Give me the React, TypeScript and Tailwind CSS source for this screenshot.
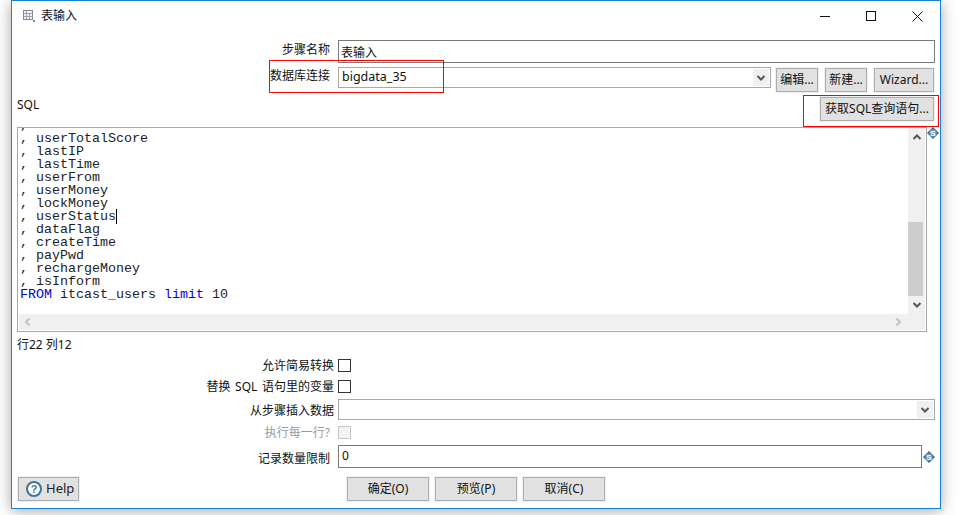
import type { ReactNode } from "react";

const sqlLines = [
  "userTotalScore",
  "lastIP",
  "lastTime",
  "userFrom",
  "userMoney",
  "lockMoney",
  "userStatus",
  "dataFlag",
  "createTime",
  "payPwd",
  "rechargeMoney",
  "isInform",
];

function Chevron({ dir, color = "#555555" }: { dir: "up" | "down" | "left" | "right"; color?: string }) {
  const paths = {
    up: "M1.5 6 5 2.5 8.5 6",
    down: "M1.5 3 5 6.5 8.5 3",
    left: "M6.5 1.5 3 5 6.5 8.5",
    right: "M3.5 1.5 7 5 3.5 8.5",
  };
  return (
    <svg width="10" height="10" viewBox="0 0 10 10" fill="none">
      <path d={paths[dir]} stroke={color} strokeWidth="2" />
    </svg>
  );
}

function VariableIcon() {
  return (
    <svg width="12" height="12" viewBox="0 0 12 12">
      <polygon points="6,0 12,6 6,12 0,6" fill="#3a6a8e" />
      <circle cx="6" cy="6" r="3.8" fill="#6f97b3" />
      <text x="6" y="8.8" textAnchor="middle" fontSize="8" fontWeight="700" fill="#ffffff" fontFamily="Liberation Sans, sans-serif">
        S
      </text>
    </svg>
  );
}

function Button({ className, children }: { className: string; children: ReactNode }) {
  return (
    <div className={`flex items-center justify-center border border-[#f0f0f0] ${className}`}>
      <div className="flex h-full w-full items-center justify-center border border-[#adadad] bg-[#e1e1e1] text-[12px] text-[#111]">
        {children}
      </div>
    </div>
  );
}

function Row({ label, pad, className, muted, children }: { label: string; pad: string; className: string; muted?: boolean; children: ReactNode }) {
  return (
    <div className={`flex items-center ${className}`}>
      <div className={`w-[321px] shrink-0 text-right text-[12px] ${pad} ${muted ? "text-[#9a9a9a]" : "text-[#111]"}`}>{label}</div>
      {children}
    </div>
  );
}

function Combo({ className, children }: { className: string; children?: ReactNode }) {
  return (
    <div className={`flex h-[21px] items-center justify-between border border-[#a9a9a9] bg-white pl-[3px] pr-px ${className}`}>
      <span className="text-[12.5px] text-[#111]">{children}</span>
      <span className="flex h-[17px] w-[16px] items-center justify-center bg-[#f0f0f0]">
        <Chevron dir="down" />
      </span>
    </div>
  );
}

function Check({ disabled }: { disabled?: boolean }) {
  return <div className={`h-[13px] w-[13px] border ${disabled ? "border-[#c8c8c8] bg-[#f4f4f4]" : "border-[#333] bg-white"}`} />;
}

export default function App() {
  return (
    <div
      className="relative h-[515px] w-[968px] overflow-hidden bg-white pl-[11px]"
      style={{ fontFamily: '"Noto Sans", "Noto Sans CJK SC", sans-serif' }}
    >
      <div className="h-[509px] w-[930px] border border-[#1683d8] bg-white shadow-[0_2px_14px_rgba(0,0,0,0.35)]">
        {/* title bar */}
        <div className="flex h-[30px] items-center pl-[11px]">
          <svg width="12" height="12" viewBox="0 0 12 12" fill="none" className="mr-[6px]">
            <rect x="0.5" y="0.5" width="9" height="9" fill="#eef2f6" stroke="#7d8a96" />
            <path d="M0.5 3.5h9M3.5 0.5v9M6.5 3.5v6M0.5 6.5h9" stroke="#9aa6b1" />
            <rect x="10" y="10" width="2" height="2" fill="#5f8fb0" />
          </svg>
          <span className="text-[12px] text-[#111]">表输入</span>
          <div className="ml-auto flex h-full">
            <div className="flex w-[46px] items-center justify-center">
              <div className="h-px w-[10px] bg-[#111]" />
            </div>
            <div className="flex w-[46px] items-center justify-center">
              <div className="h-[10px] w-[10px] border border-[#111]" />
            </div>
            <div className="flex w-[46px] items-center justify-center">
              <svg width="11" height="11" viewBox="0 0 11 11" stroke="#111" strokeWidth="1">
                <path d="M0.5 0.5 10.5 10.5M10.5 0.5 0.5 10.5" />
              </svg>
            </div>
          </div>
        </div>

        <div className="pl-[5px] pr-[5px]">
          <Row label="步骤名称" pad="pr-[8px] pb-[3px]" className="mt-[9px]">
            <div className="flex h-[23px] flex-1 items-center border border-[#7a7a7a] pl-[2px] pt-[2px] text-[12px] text-[#111]">表输入</div>
          </Row>

          <Row label="数据库连接" pad="pr-[8px] pb-[2px]" className="mt-[4px] h-[26px] items-start">
            <Combo className="mt-0 w-[433px]">bigdata_35</Combo>
            <Button className="ml-[4px] h-[26px] w-[44px]">编辑...</Button>
            <Button className="ml-[5px] h-[26px] w-[44px]">新建...</Button>
            <Button className="ml-[5px] h-[26px] w-[62px]">Wizard...</Button>
          </Row>

          <div className="mt-[3px] flex h-[26px] items-start justify-between">
            <span className="text-[12px] text-[#111]">SQL</span>
            <Button className="h-[26px] w-[116px]">获取SQL查询语句...</Button>
          </div>

          {/* sql editor */}
          <div className="relative mt-[5px] h-[205px] w-[910px] border border-[#a9a9a9] bg-white pl-px pr-px">
            <div className="flex h-[186px]">
              <div
                className="h-full w-[890px] overflow-hidden pl-px text-[13.33px] leading-[13px] text-[#222]"
                style={{ fontFamily: '"Liberation Mono", monospace' }}
              >
                <div className="mt-[-9px] whitespace-pre">,</div>
                {sqlLines.map((line) => (
                  <div key={line} className="whitespace-pre">
                    {", "}
                    <span className={line === "userStatus" ? "border-r border-black" : ""}>{line}</span>
                  </div>
                ))}
                <div className="whitespace-pre">
                  <span className="text-[#0000e0]">FROM</span> itcast_users <span className="text-[#0000e0]">limit</span> 10
                </div>
              </div>
              <div className="flex w-[17px] flex-col items-center bg-[#f0f0f0]">
                <div className="flex h-[17px] items-center justify-center pt-[2px]">
                  <Chevron dir="up" />
                </div>
                <div className="mt-[77px] h-[74px] w-[15px] self-start bg-[#cdcdcd]" />
                <div className="flex h-[17px] items-center justify-center">
                  <Chevron dir="down" />
                </div>
              </div>
            </div>
            <div className="flex h-[16px] items-center justify-between bg-[#f0f0f0] pl-[4px] pr-[22px]">
              <Chevron dir="left" color="#c4c4c4" />
              <Chevron dir="right" color="#c4c4c4" />
            </div>
            <div className="absolute right-[-13px] top-[-1px]">
              <VariableIcon />
            </div>
          </div>

          <div className="mt-[4px] h-[17px] text-[12px] leading-[17px] text-[#111]">行22 列12</div>

          <Row label="允许简易转换" pad="pr-[4px]" className="mt-[6px] h-[13px]">
            <Check />
          </Row>
          <Row label="替换 SQL 语句里的变量" pad="pr-[4px] [word-spacing:1.5px]" className="mt-[8px] h-[13px]">
            <Check />
          </Row>
          <Row label="从步骤插入数据" pad="pr-[4px] pt-[2px]" className="mt-[6px] h-[21px]">
            <Combo className="flex-1" />
          </Row>
          <Row label="执行每一行?" pad="pr-[8px]" muted className="mt-[6px] h-[13px]">
            <Check disabled />
          </Row>
          <Row label="记录数量限制" pad="pr-[8px] pt-[4px]" className="mt-[6px] h-[23px]">
            <div className="flex h-[23px] w-[584px] items-center border border-[#7a7a7a] pl-[3px] pb-[2px] text-[12px] text-[#111]">0</div>
            <div className="ml-px">
              <VariableIcon />
            </div>
          </Row>

          {/* bottom buttons */}
          <div className="mt-[8px] flex">
            <div className="flex h-[26px] w-[63px] border border-[#f0f0f0]">
              <div className="flex flex-1 items-center gap-[4px] border border-[#adadad] bg-[#e1e1e1] pl-[7px] text-[13px] text-[#222]">
                <svg width="16" height="16" viewBox="0 0 16 16">
                  <circle cx="8" cy="8" r="7" fill="#ffffff" stroke="#3f7396" strokeWidth="2" />
                  <text x="8" y="12" textAnchor="middle" fontSize="11" fontWeight="700" fill="#3f7396" fontFamily="Liberation Sans, sans-serif">
                    ?
                  </text>
                </svg>
                Help
              </div>
            </div>
            <Button className="ml-[266px] h-[26px] w-[84px]">确定(O)</Button>
            <Button className="ml-[4px] h-[26px] w-[84px]">预览(P)</Button>
            <Button className="ml-[4px] h-[26px] w-[84px]">取消(C)</Button>
          </div>
        </div>
      </div>

      {/* red annotation boxes over the dialog */}
      <div className="absolute left-[269px] top-[60px] h-[33px] w-[175px] border border-[#ff0000]" />
      <div className="absolute left-[803px] top-[95px] h-[32px] w-[136px] border border-[#ff0000]" />
    </div>
  );
}
